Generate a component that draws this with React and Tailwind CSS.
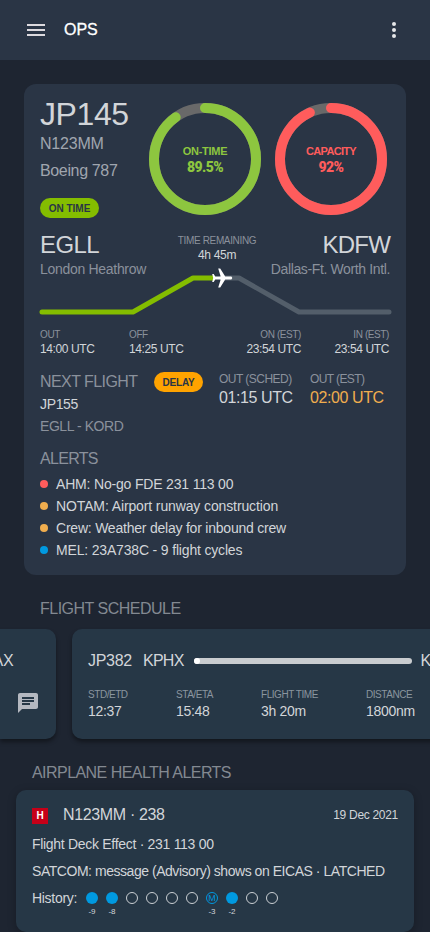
const sans = "font-['Liberation_Sans',Arial,sans-serif]";

function Ring({ label, value, percent, color, track }) {
  const r = 51;
  const c = 2 * Math.PI * r;
  return (
    <div className={"relative size-28 " + color}>
      <svg viewBox="0 0 112 112" className="block size-28">
        <circle cx="56" cy="56" r={r} fill="none" stroke="#696969" strokeWidth="10" />
        <circle
          cx="56"
          cy="56"
          r={r}
          fill="none"
          stroke="currentColor"
          strokeWidth="10"
          strokeLinecap="round"
          strokeDasharray={`${(c * percent) / 100} ${c}`}
          transform="rotate(-90 56 56)"
        />
      </svg>
      <div className="absolute inset-0 flex flex-col items-center pt-[42px]">
        <div className={"text-[11px] leading-[13px] font-bold " + track}>{label}</div>
        <div className="mt-px font-[Roboto,sans-serif] text-[14px] leading-4 font-black tracking-[-0.6px]">{value}</div>
      </div>
    </div>
  );
}

function Stamp({ label, time, className }) {
  return (
    <div className={className}>
      <div className="text-[10px] leading-[13px] tracking-[-0.4px] text-[#8a919c]">{label}</div>
      <div className="mt-px text-[12px] leading-[14px] tracking-[-0.4px]">{time}</div>
    </div>
  );
}

function Alert({ dot, track, children }) {
  return (
    <li className="flex h-[22px] items-center gap-2">
      <span className={"size-2 rounded-full " + dot} />
      <span className={"text-[14px] leading-[22px] whitespace-nowrap " + track}>{children}</span>
    </li>
  );
}

function Stat({ label, value, className }) {
  return (
    <div className={"shrink-0 whitespace-nowrap " + className}>
      <div className="text-[10px] leading-[13px] tracking-[-0.45px] text-[#8a959f]">{label}</div>
      <div className="text-[14px] leading-5 tracking-[-0.3px]">{value}</div>
    </div>
  );
}

const history = [
  { kind: "full", n: "-9" },
  { kind: "full", n: "-8" },
  { kind: "empty" },
  { kind: "empty" },
  { kind: "empty" },
  { kind: "empty" },
  { kind: "m", n: "-3" },
  { kind: "full", n: "-2" },
  { kind: "empty" },
  { kind: "empty" },
];

const circle = {
  full: "bg-[#0099e0]",
  empty: "border border-[#cbd0d4]",
  m: "border border-[#0099e0] text-[#0099e0]",
};

export default function App() {
  return (
    <div className={"h-[932px] w-[430px] overflow-hidden bg-[#1e2531] text-[#d2d5d9] " + sans}>
      <header className="flex h-[60px] items-center bg-[#2a3545] px-[27px]">
        <div className="flex w-[18px] flex-col gap-[3px]">
          <span className="h-0.5 bg-[#dcdade]" />
          <span className="h-0.5 bg-[#dcdade]" />
          <span className="h-0.5 bg-[#dcdade]" />
        </div>
        <h1 className="ml-[19px] text-[16px] leading-5 text-white [-webkit-text-stroke:0.3px_white]">OPS</h1>
        <div className="mr-[7px] -ml-1 flex grow flex-col items-end gap-0.5">
          <span className="size-1 rounded-full bg-[#e6e7e9]" />
          <span className="size-1 rounded-full bg-[#e6e7e9]" />
          <span className="size-1 rounded-full bg-[#e6e7e9]" />
        </div>
      </header>

      <section className="mx-6 mt-6 h-[491px] rounded-xl bg-[#2a3545] px-4 pt-[14px]">
        <div className="flex h-[120px]">
          <div className="w-[109px] whitespace-nowrap">
            <div className="text-[32px] leading-8 tracking-[-0.4px]">JP145</div>
            <div className="mt-[3px] text-[16px] leading-[21px] tracking-[-0.2px] text-[#a0a6af]">N123MM</div>
            <div className="mt-[6px] text-[16px] leading-[21px] tracking-[-0.35px] text-[#a0a6af]">Boeing 787</div>
            <div className="mt-[17px] flex h-5 w-[59px] items-center justify-center rounded-full bg-[#84bd00] text-[10px] font-bold text-[#2a3545]">ON TIME</div>
          </div>
          <div className="mt-[5px] flex gap-[14px]">
            <Ring label="ON-TIME" value="89.5%" percent={90.1} color="text-[#8dc63f]" track="tracking-[-0.3px]" />
            <Ring label="CAPACITY" value="92%" percent={93.05} color="text-[#ff5c5c]" track="tracking-[-0.7px]" />
          </div>
        </div>

        <div className="mt-[13px] grid h-12 w-[350px] grid-cols-[134px_86px_130px] whitespace-nowrap">
          <div>
            <div className="text-[24px] leading-[27px] tracking-[-0.6px]">EGLL</div>
            <div className="mt-px text-[14px] leading-5 tracking-[-0.3px] text-[#8a919c]">London Heathrow</div>
          </div>
          <div className="pt-[3px] text-center">
            <div className="text-[10px] leading-[13px] tracking-[-0.35px] text-[#8a919c]">TIME REMAINING</div>
            <div className="mt-px text-[12px] leading-[14px] tracking-[-0.3px]">4h 45m</div>
          </div>
          <div className="flex flex-col items-end">
            <div className="text-[24px] leading-[27px] tracking-[-0.8px]">KDFW</div>
            <div className="mt-px text-[14px] leading-5 tracking-[-0.37px] text-[#8a919c]">Dallas-Ft. Worth Intl.</div>
          </div>
        </div>

        <svg viewBox="0 0 350 50" className="-mt-[13px] block h-[50px] w-[350px] overflow-visible">
          <path d="M182 12H199L259 46H349" fill="none" stroke="#535e6a" strokeWidth="5" strokeLinecap="round" strokeLinejoin="round" />
          <path d="M2 46H93L153 12H173" fill="none" stroke="#84bd00" strokeWidth="5" strokeLinecap="round" strokeLinejoin="round" />
          <path d="M22 16v-2l-8-5V3.500C14 2.670 13.330 2 12.500 2S11 2.670 11 3.500V9l-8 5v2l8-2.500V19l-2.500 1.500V22l4-1 4 1v-1.500L14 19v-5.500l8 2.500z" fill="#fff" transform="translate(194.200 -.5) rotate(90)" />
        </svg>

        <div className="mt-3 flex h-7 w-[350px] whitespace-nowrap">
          <Stamp label="OUT" time="14:00 UTC" className="w-[89px]" />
          <Stamp label="OFF" time="14:25 UTC" className="w-[89px]" />
          <Stamp label="ON (EST)" time="23:54 UTC" className="w-[83px] text-right" />
          <Stamp label="IN (EST)" time="23:54 UTC" className="w-[88px] text-right" />
        </div>

        <div className="mt-4 flex whitespace-nowrap">
          <div className="w-[114px]">
            <div className="text-[16px] leading-[19px] tracking-[-0.57px] text-[#8a919c]">NEXT FLIGHT</div>
            <div className="mt-[3px] text-[14px] leading-5 tracking-[-0.35px]">JP155</div>
            <div className="mt-0.5 text-[14px] leading-5 tracking-[-0.43px] text-[#8a919c]">EGLL - KORD</div>
          </div>
          <div className="flex h-5 w-[49px] items-center justify-center rounded-full bg-[#ffa300] text-[10px] font-bold tracking-[-0.2px] text-[#2a3545]">DELAY</div>
          <div className="ml-4 w-[91px]">
            <div className="text-[12px] leading-[14px] tracking-[-0.52px] text-[#8a919c]">OUT (SCHED)</div>
            <div className="mt-0.5 text-[16px] leading-[19px] tracking-[-0.4px]">01:15 UTC</div>
          </div>
          <div>
            <div className="text-[12px] leading-[14px] tracking-[-0.6px] text-[#8a919c]">OUT (EST)</div>
            <div className="mt-0.5 text-[16px] leading-[19px] tracking-[-0.4px] text-[#f0ad4e]">02:00 UTC</div>
          </div>
        </div>

        <div className="mt-[13px] text-[16px] leading-[19px] tracking-[-0.7px] text-[#8a919c]">ALERTS</div>
        <ul className="mt-[5px]">
          <Alert dot="bg-[#ff5c5c]" track="tracking-[-0.18px]">AHM: No-go FDE 231 113 00</Alert>
          <Alert dot="bg-[#f0ad4e]" track="tracking-[-0.12px]">NOTAM: Airport runway construction</Alert>
          <Alert dot="bg-[#f0ad4e]" track="tracking-[-0.22px]">Crew: Weather delay for inbound crew</Alert>
          <Alert dot="bg-[#0099e0]" track="tracking-[-0.17px]">MEL: 23A738C - 9 flight cycles</Alert>
        </ul>
      </section>

      <h2 className="mt-6 ml-10 text-[16px] leading-[19px] tracking-[-0.5px] text-[#838991]">FLIGHT SCHEDULE</h2>
      <div className="mt-[11px] flex h-[110px] gap-4">
        <div className="flex w-14 shrink-0 flex-col rounded-r-[10px] bg-[#263746] pt-[22px] shadow-[0_3px_4px_rgba(0,0,0,0.4)]">
          <div className="-ml-[16px] text-[16px] leading-5 tracking-[-0.3px]">LAX</div>
          <svg viewBox="2 2 20 20" className="mt-[22px] ml-[18px] block size-5" fill="#b4b8c0">
            <path d="M20 2H4c-1.100 0-2 .9-2 2v18l4-4h14c1.100 0 2-.9 2-2V4c0-1.100-.9-2-2-2zM6 9h12v2H6V9zm8 5H6v-2h8v2zm4-6H6V6h12v2z" />
          </svg>
        </div>
        <div className="w-[390px] shrink-0 rounded-[10px] bg-[#263746] pt-[22px] pl-4 shadow-[0_3px_4px_rgba(0,0,0,0.4)]">
          <div className="flex h-5 items-center text-[16px] leading-5 tracking-[-0.3px] whitespace-nowrap">
            <div className="w-[55px]">JP382</div>
            <div className="w-[51px] tracking-[-0.7px]">KPHX</div>
            <div className="flex h-[6px] w-[218px] items-center rounded-full bg-[#c9cccf]">
              <span className="size-[6px] rounded-full bg-white" />
            </div>
            <div className="ml-[9px]">KSEA</div>
          </div>
          <div className="mt-[17px] flex">
            <Stat label="STD/ETD" value="12:37" className="w-[88px]" />
            <Stat label="STA/ETA" value="15:48" className="w-[85px]" />
            <Stat label="FLIGHT TIME" value="3h 20m" className="w-[105px]" />
            <Stat label="DISTANCE" value="1800nm" className="w-[60px]" />
          </div>
        </div>
      </div>

      <h2 className="mt-6 ml-8 text-[16px] leading-[19px] tracking-[-0.55px] text-[#838991]">AIRPLANE HEALTH ALERTS</h2>
      <section className="mx-4 mt-2 h-[142px] rounded-[10px] bg-[#263746] px-4 pt-[15px] whitespace-nowrap shadow-[0_2px_8px_rgba(0,0,0,0.25)]">
        <div className="flex h-5 items-center">
          <span className="mt-px flex size-4 items-center justify-center bg-[#c60018] text-[10px] leading-4 font-bold text-white">H</span>
          <span className="ml-[15px] text-[16px] leading-5 tracking-[-0.35px]">N123MM · 238</span>
          <span className="ml-auto text-[12px] leading-5 tracking-[-0.3px]">19 Dec 2021</span>
        </div>
        <div className="mt-[9px] text-[14px] leading-5 tracking-[-0.3px]">Flight Deck Effect · 231 113 00</div>
        <div className="mt-[7px] text-[14px] leading-5 tracking-[-0.46px]">SATCOM: message (Advisory) shows on EICAS · LATCHED</div>
        <div className="mt-[7px] flex">
          <div className="w-[54px] text-[14px] leading-5 tracking-[-0.3px]">History:</div>
          <div className="flex gap-2 pt-1">
            {history.map((h, i) => (
              <div key={i} className="flex w-3 flex-col items-center">
                <span className={"flex size-3 items-center justify-center rounded-full text-[9px] leading-none " + circle[h.kind]}>
                  {h.kind === "m" ? "M" : null}
                </span>
                <span className="mt-[3px] text-[8px] leading-[10px]">{h.n}</span>
              </div>
            ))}
          </div>
        </div>
      </section>
    </div>
  );
}
